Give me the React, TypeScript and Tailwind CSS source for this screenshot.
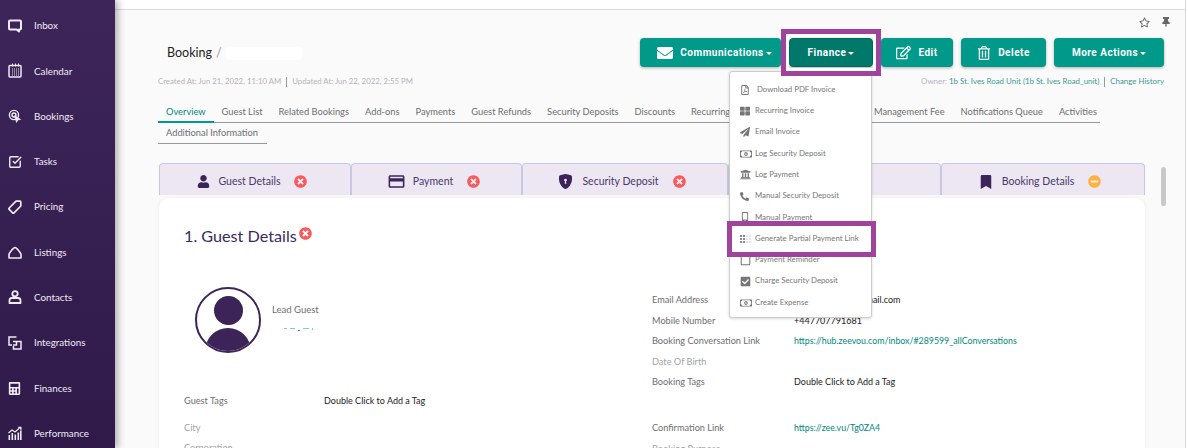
import type { ReactNode } from 'react';
import { SquareCheckBig } from 'lucide-react';
import {
  FaBookmark,
  FaCalculator,
  FaCheckSquare,
  FaEnvelope,
  FaMinusCircle,
  FaMobileAlt,
  FaPaperPlane,
  FaPhoneAlt,
  FaRegEdit,
  FaRegFilePdf,
  FaRegMoneyBillAlt,
  FaRegSquare,
  FaRegStar,
  FaRegTrashAlt,
  FaThLarge,
  FaThumbtack,
  FaTimesCircle,
  FaUniversity,
  FaUser,
} from 'react-icons/fa';
import { MdCreditCard } from 'react-icons/md';
import { BsShieldLockFill } from 'react-icons/bs';

const InboxIcon = () => (
  <svg width="14" height="14" viewBox="0 0 14 14" fill="none" stroke="currentColor" strokeWidth="2">
    <path d="M2 1.500h10a1 1 0 0 1 1 1v7a1 1 0 0 1-1 1h-1v2l-2.500-2H2a1 1 0 0 1-1-1v-7a1 1 0 0 1 1-1z" strokeLinejoin="round" />
  </svg>
);

const CalendarIcon = () => (
  <svg width="14" height="15" viewBox="0 0 14 15" fill="none" stroke="currentColor">
    <rect x="1" y="2.500" width="12" height="11.500" rx="1" strokeWidth="1.500" />
    <path d="M4.500 0.500v3M7.500 0.500v3M10.500 0.500v3" strokeWidth="1" />
    <path d="M4 6h7M4 8h7M4 10h7M4 12h7" strokeWidth="1" strokeDasharray="1 1" />
  </svg>
);

const BookingsIcon = () => (
  <svg width="14" height="15" viewBox="0 0 14 15" fill="none" stroke="currentColor" strokeWidth="1.4">
    <circle cx="6" cy="6" r="4.600" />
    <circle cx="6" cy="6" r="2" />
    <path d="M6.500 6.500l2 7 1.400-2.600 2.800-.4z" fill="currentColor" strokeWidth="0.6" />
  </svg>
);

const PricingIcon = () => (
  <svg width="14" height="14" viewBox="0 0 14 14" fill="none" stroke="currentColor" strokeWidth="1.700">
    <path d="M8 1.200h4a.8.8 0 0 1 .8.8v4L6 12.800a1 1 0 0 1-1.400 0L1.200 9.400a1 1 0 0 1 0-1.400z" strokeLinejoin="round" />
  </svg>
);

const ListingsIcon = () => (
  <svg width="14" height="13" viewBox="0 0 14 13" fill="none" stroke="currentColor" strokeWidth="1.600">
    <path d="M1 12h12v-3.500C13 7 8.500 1.500 7 1.500S1 7 1 8.500z" strokeLinejoin="round" />
  </svg>
);

const ContactsIcon = () => (
  <svg width="14" height="14" viewBox="0 0 14 14" fill="none" stroke="currentColor" strokeWidth="1.800">
    <circle cx="7" cy="3.800" r="2.700" />
    <path d="M1.500 13v-2.500a2.500 2.500 0 0 1 2.500-2.500h6a2.500 2.500 0 0 1 2.500 2.500V13z" strokeLinejoin="round" />
  </svg>
);

const IntegrationsIcon = () => (
  <svg width="14" height="14" viewBox="0 0 14 14" fill="none" stroke="currentColor" strokeWidth="1.500">
    <path d="M8.500 1H1v8h3" />
    <path d="M5 5.500h8V13H5.500v-3" />
    <path d="M8.500 5.500V9H5" />
  </svg>
);

const PerformanceIcon = () => (
  <svg width="14" height="14" viewBox="0 0 14 14" fill="currentColor">
    <rect x="0.500" y="9" width="1.600" height="5" />
    <rect x="3.500" y="7" width="1.600" height="7" />
    <rect x="6.500" y="8.500" width="1.600" height="5.500" />
    <rect x="9.500" y="6.500" width="1.600" height="7.500" />
    <rect x="12" y="4.500" width="1.600" height="9.500" />
    <path d="M0.500 7l3.500-3 3 2 4-3.500" fill="none" stroke="currentColor" strokeWidth="1.200" />
    <path d="M9.500 0.800h4v3.800z" />
  </svg>
);

const navItems: { label: string; icon: ReactNode }[] = [
  { label: 'Inbox', icon: <InboxIcon /> },
  { label: 'Calendar', icon: <CalendarIcon /> },
  { label: 'Bookings', icon: <BookingsIcon /> },
  { label: 'Tasks', icon: <SquareCheckBig size={14} strokeWidth={2.4} /> },
  { label: 'Pricing', icon: <PricingIcon /> },
  { label: 'Listings', icon: <ListingsIcon /> },
  { label: 'Contacts', icon: <ContactsIcon /> },
  { label: 'Integrations', icon: <IntegrationsIcon /> },
  { label: 'Finances', icon: <FaCalculator size={13} /> },
  { label: 'Performance', icon: <PerformanceIcon /> },
];

const pageTabs = [
  'Overview',
  'Guest List',
  'Related Bookings',
  'Add-ons',
  'Payments',
  'Guest Refunds',
  'Security Deposits',
  'Discounts',
  'Recurring Invoices',
  'Expenses',
  'Management Fee',
  'Notifications Queue',
  'Activities',
];

const menuItems: { label: string; icon: ReactNode }[] = [
  { label: 'Download PDF Invoice', icon: <FaRegFilePdf size={10} /> },
  { label: 'Recurring Invoice', icon: <FaThLarge size={10} /> },
  { label: 'Email Invoice', icon: <FaPaperPlane size={10} /> },
  { label: 'Log Security Deposit', icon: <FaRegMoneyBillAlt size={12} /> },
  { label: 'Log Payment', icon: <FaUniversity size={11} /> },
  { label: 'Manual Security Deposit', icon: <FaPhoneAlt size={9} /> },
  { label: 'Manual Payment', icon: <FaMobileAlt size={10} /> },
  {
    label: 'Generate Partial Payment Link',
    icon: (
      <span className="grid grid-cols-4 gap-[1px] opacity-60">
        {Array.from({ length: 12 }).map((_, i) => (
          <span key={i} className={i % 4 < 2 ? 'h-[2px] w-[2px] bg-gray-700' : 'h-[2px] w-[2px] bg-gray-300'} />
        ))}
      </span>
    ),
  },
  { label: 'Payment Reminder', icon: <FaRegSquare size={11} /> },
  { label: 'Charge Security Deposit', icon: <FaCheckSquare size={11} /> },
  { label: 'Create Expense', icon: <FaRegMoneyBillAlt size={12} /> },
];

function ActionButton({ width, icon, label, caret, dark }: { width: string; icon?: ReactNode; label: string; caret?: boolean; dark?: boolean }) {
  return (
    <button
      className={`${width} ${dark ? 'bg-[#00796b] border border-[#00695c]' : 'bg-[#00998a]'} flex h-[29px] items-center justify-center gap-[7px] rounded-[4px] font-['Roboto',sans-serif] text-[10px] font-bold tracking-[0.5px] text-white shadow-[0_1px_3px_rgba(0,0,0,0.3)]`}
    >
      {icon}
      <span>{label}</span>
      {caret && <span className="-ml-[5px] mt-[1px] h-0 w-0 border-x-[3px] border-t-[3px] border-x-transparent border-t-white" />}
    </button>
  );
}

function WizardTab({ width, icon, label, status = 'error' }: { width: string; icon?: ReactNode; label?: string; status?: 'error' | 'warn' }) {
  return (
    <div className={`${width} flex h-[32px] items-center justify-center gap-[9px] rounded-t-[4px] border-x border-t border-[#c8c8e2] bg-[#ede7f4] pr-[6px] pt-[4px] text-[10.500px] text-[#4a3a66]`}>
      {icon && <span className="text-[#3c2459]">{icon}</span>}
      {label && <span className="mr-[5px]">{label}</span>}
      {status === 'error' ? <FaTimesCircle size={13} className="text-[#fa5a5a]" /> : <FaMinusCircle size={13} className="text-[#fdb33f]" />}
    </div>
  );
}

function InfoRow({ label, children, muted, extra }: { label: string; children?: ReactNode; muted?: boolean; extra?: string }) {
  return (
    <div className={`flex h-[20.500px] items-baseline leading-[21px] ${extra ?? ''}`}>
      <span className={`w-[142px] text-[9.200px] ${muted ? 'text-[#a3a3a3]' : 'text-[#6e6e6e]'}`}>{label}</span>
      {children}
    </div>
  );
}

export default function App() {
  return (
    <div className="relative flex h-[448px] w-[1188px] overflow-hidden bg-white font-['Lato',sans-serif] text-[9px]">
      {/* sidebar */}
      <aside className="z-10 flex w-[115px] shrink-0 flex-col bg-gradient-to-b from-[#3d2559] to-[#2f1a4a] pt-[3px] text-[9.800px] shadow-[3px_0_7px_rgba(0,0,0,0.3)]">
        {navItems.map((item) => (
          <div key={item.label} className="flex h-[45.300px] shrink-0 items-center text-[#f0eaf5]">
            <span className="flex w-[34px] justify-center pr-[5px]">{item.icon}</span>
            <span>{item.label}</span>
          </div>
        ))}
      </aside>

      {/* main */}
      <main className="mr-[2px] flex min-w-0 flex-1 flex-col border-r border-[#d8d8e2] bg-[#fafafa]">
        <div className="h-[10px] shrink-0 border-b border-[#d8d8e2] bg-white" />
        <div className="flex h-[28px] shrink-0 justify-end gap-[11px] pr-[14px] pt-[7px] text-[#666]">
          <FaRegStar size={11} />
          <FaThumbtack size={10} />
        </div>

        <div className="flex min-h-0 flex-1 flex-col pl-[43px]">
          <div className="flex h-[34px] shrink-0 items-start justify-between pr-[21px]">
            <div className="ml-[9px] flex items-center gap-[4px] pt-[6px] text-[12.500px] text-[#222]">
              <span>Booking</span>
              <span className="text-[#999]">/</span>
              <span className="h-[13px] w-[76px] rounded-[4px] bg-white" />
            </div>
            <div className="flex gap-[8px]">
              <ActionButton width="w-[141px] pl-[8px]" icon={<FaEnvelope size={16} />} label="Communications" caret />
              <ActionButton width="w-[84px]" label="Finance" caret dark />
              <ActionButton width="w-[72px]" icon={<FaRegEdit size={15} />} label="Edit" />
              <ActionButton width="w-[85px]" icon={<FaRegTrashAlt size={14} />} label="Delete" />
              <ActionButton width="w-[110px]" label="More Actions" caret />
            </div>
          </div>

          <div className="mt-[4px] flex h-[12px] shrink-0 items-center justify-between pr-[21px] text-[7.800px] text-[#b9b2ba]">
            <div className="flex items-center">
              <span>Created At: Jun 21, 2022, 11:10 AM</span>
              <span className="mx-[5px] h-[10px] w-px bg-[#999]" />
              <span>Updated At: Jun 22, 2022, 2:55 PM</span>
            </div>
            <div className="flex items-center text-[7.900px]">
              <span>Owner:&nbsp;</span>
              <span className="text-[#3d9a90]">1b St. Ives Road Unit (1b St. Ives Road_unit)</span>
              <span className="mx-[5px] h-[10px] w-px bg-[#999]" />
              <span className="text-[#3d9a90]">Change History</span>
            </div>
          </div>

          <div className="mt-[13px] flex h-[22px] w-[942px] shrink-0 border-b border-[#999] text-[9.300px]">
            {pageTabs.map((tab, i) => (
              <span
                key={tab}
                className={
                  i === 0
                    ? 'h-[22px] whitespace-nowrap border-b-2 border-[#00998a] px-[8px] pt-[4px] text-[#00897b]'
                    : tab === 'Expenses'
                      ? 'ml-[38px] h-[21px] whitespace-nowrap px-[8px] pt-[4px] text-[#6e6e6e]'
                      : 'h-[21px] whitespace-nowrap px-[8px] pt-[4px] text-[#6e6e6e]'
                }
              >
                {tab}
              </span>
            ))}
          </div>
          <div className="flex h-[21px] w-[109px] shrink-0 items-center whitespace-nowrap border-b border-[#999] px-[8px] text-[9.300px] text-[#6e6e6e]">Additional Information</div>

          <div className="ml-px mt-[19px] flex w-[986px] shrink-0">
            <WizardTab width="w-[192px]" icon={<FaUser size={13} />} label="Guest Details" />
            <WizardTab width="w-[171px]" icon={<MdCreditCard size={19} className="-mr-[2px]" />} label="Payment" />
            <WizardTab width="w-[206px]" icon={<BsShieldLockFill size={15} />} label="Security Deposit" />
            <div className="flex w-[213px] justify-end">
              <WizardTab width="w-full" />
            </div>
            <WizardTab width="w-[204px]" icon={<FaBookmark size={14} />} label="Booking Details" status="warn" />
          </div>

          <section className="ml-px mt-[3px] min-h-0 w-[986px] flex-1 overflow-hidden rounded-t-[10px] bg-white pl-[25px] shadow-[0_0_4px_rgba(0,0,0,0.06)]">
            <div className="mt-[28px] flex h-[20px] items-center gap-[2px] text-[16.200px] text-[#3a2a5e]">
              <span>1. Guest Details</span>
              <FaTimesCircle size={13} className="mb-[5px] text-[#fa5a5a]" />
            </div>
            <div className="flex">
              <div className="w-[468px] pt-[41px]">
                <div className="ml-[11px] flex gap-[11px]">
                  <div className="flex h-[66px] w-[66px] flex-col items-center overflow-hidden rounded-full border-2 border-[#3c2459] bg-white">
                    <span className="mt-[7px] h-[29px] w-[29px] shrink-0 rounded-full bg-[#3c2459]" />
                    <span className="mt-[3px] h-[40px] w-[46px] shrink-0 rounded-t-[24px] bg-[#3c2459]" />
                  </div>
                  <div className="pt-[16px] text-[9.500px] text-[#6e6e6e]">
                    <div className="h-[14px] leading-[14px]">Lead Guest</div>
                    <div className="ml-[12px] mt-[11px] flex gap-[3px]">
                      <span className="h-px w-[3px] bg-[#7fcfc6]" />
                      <span className="h-px w-[5px] bg-[#00998a] opacity-50" />
                      <span className="mt-[2px] h-px w-[2px] bg-[#00998a]" />
                      <span className="h-px w-[6px] bg-[#7fcfc6]" />
                      <span className="h-[2px] w-px bg-[#7fcfc6]" />
                    </div>
                  </div>
                </div>
                <div className="mt-[40px] flex h-[16px] items-baseline leading-[16px]">
                  <span className="w-[140px] text-[9.200px] text-[#6e6e6e]">Guest Tags</span>
                  <span className="text-[#222]">Double Click to Add a Tag</span>
                </div>
                <div className="mt-[11px] h-[16px] text-[9.200px] leading-[16px] text-[#a3a3a3]">City</div>
                <div className="mt-[4px] h-[16px] text-[9.200px] leading-[16px] text-[#a3a3a3]">Corporation</div>
              </div>
              <div className="pt-[43px]">
                <InfoRow label="Email Address"><span className="text-[#222]">guest.bookings@gmail.com</span></InfoRow>
                <InfoRow label="Mobile Number"><span className="text-[#222]">+447707791681</span></InfoRow>
                <InfoRow label="Booking Conversation Link"><span className="text-[8.800px] text-[#00897b]">https://hub.zeevou.com/inbox/#289599_allConversations</span></InfoRow>
                <InfoRow label="Date Of Birth" muted />
                <InfoRow label="Booking Tags"><span className="text-[#222]">Double Click to Add a Tag</span></InfoRow>
                <div className="h-[20.500px]" />
                <InfoRow label="Confirmation Link" extra="mt-[5px]"><span className="text-[8.800px] text-[#00897b]">https://zee.vu/Tg0ZA4</span></InfoRow>
                <InfoRow label="Booking Purpose" muted />
              </div>
            </div>
          </section>
        </div>
      </main>

      {/* finance dropdown */}
      <div className="absolute left-[729px] top-[71px] z-20 h-[247px] w-[143px] rounded-[3px] border border-[#ccc] bg-white pt-[7px] text-[7.800px] text-[#777] shadow-[0_1px_3px_rgba(0,0,0,0.15)]">
        {menuItems.map((item, i) => (
          <div key={item.label} className="flex h-[21.300px] items-center pl-[10px]">
            <span className={i === 0 ? 'flex w-[17px] justify-start' : 'flex w-[15px] justify-start'}>{item.icon}</span>
            <span className="whitespace-nowrap">{item.label}</span>
          </div>
        ))}
      </div>

      {/* highlight boxes */}
      <div className="absolute left-[781px] top-[29px] z-30 h-[47px] w-[100px] border-[5px] border-[#a0439c] outline outline-[3px] -outline-offset-[8px] outline-white" />
      <div className="absolute left-[727px] top-[221px] z-30 h-[36px] w-[149px] border-[5px] border-[#a0439c]" />

      {/* page scrollbar */}
      <div className="absolute left-[1161px] top-[167px] h-[39px] w-[5px] rounded-full bg-[#c8c8c8]" />
    </div>
  );
}
